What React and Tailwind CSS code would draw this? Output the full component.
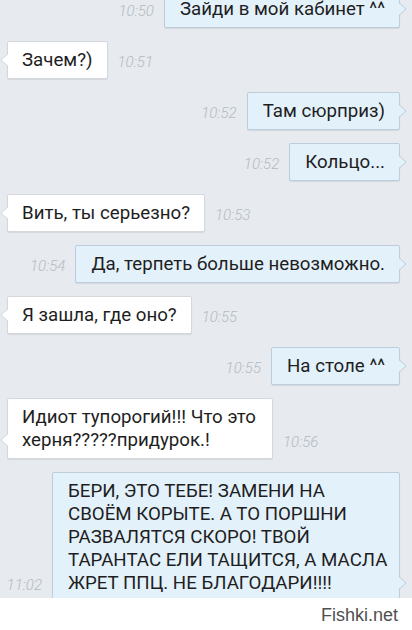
import React from 'react';

// Chat screenshot: incoming (white) and outgoing (light blue) bubbles with times.

function Tail({ side, fill, stroke }) {
  if (side === 'in') {
    return (
      <svg width="9" height="14" viewBox="0 0 9 14" className="absolute left-[-8px] bottom-[11px]">
        <polygon points="9,0.5 1,7 9,13.5" fill={fill} />
        <polyline points="7.5,1 1,7 7.5,13" fill="none" stroke={stroke} strokeWidth="1" />
      </svg>
    );
  }
  return (
    <svg width="9" height="14" viewBox="0 0 9 14" className="absolute right-[-8px] bottom-[11px]">
      <polygon points="0,0.5 8,7 0,13.5" fill={fill} />
      <polyline points="1.5,1 8,7 1.5,13" fill="none" stroke={stroke} strokeWidth="1" />
    </svg>
  );
}

function Time({ children }) {
  return (
    <span className="mb-[8px] text-[15px] leading-[18px] italic font-light text-[#b3bbc3] whitespace-nowrap">
      {children}
    </span>
  );
}

function Incoming({ time, children, width }) {
  return (
    <div className="flex items-end gap-[10px] pl-[7px]">
      <div
        className={`relative bg-white border border-[#d4d8dd] rounded-[2px] pl-[14px] pr-[14px] pt-[7px] pb-[6px] text-[18.7px] leading-[23px] text-[#1e1e1e] whitespace-nowrap shadow-[0_1px_1px_rgba(0,0,0,0.08)] ${width || ''}`}
      >
        {children}
        <Tail side="in" fill="#ffffff" stroke="#d4d8dd" />
      </div>
      <Time>{time}</Time>
    </div>
  );
}

function Outgoing({ time, children, width }) {
  return (
    <div className="flex items-end justify-end gap-[10px] pr-[12px]">
      <Time>{time}</Time>
      <div
        className={`relative bg-[#e3f1fb] border border-[#bccddb] rounded-[2px] pl-[15px] pr-[14px] pt-[7px] pb-[6px] text-[18.7px] leading-[23px] text-[#1e1e1e] whitespace-nowrap shadow-[0_1px_1px_rgba(0,0,0,0.08)] ${width || ''}`}
      >
        {children}
        <Tail side="out" fill="#e3f1fb" stroke="#bccddb" />
      </div>
    </div>
  );
}

export default function App() {
  return (
    <div className="w-[412px] h-[630px] overflow-hidden flex flex-col bg-white font-['Roboto','Noto_Sans',sans-serif]">
      <div className="h-[598px] shrink-0 overflow-hidden bg-[#e7eaee]">
        <div className="flex flex-col gap-[13px] mt-[-10px]">
          <Outgoing time="10:50">Зайди в мой кабинет ^^</Outgoing>
          <Incoming time="10:51">Зачем?)</Incoming>
          <Outgoing time="10:52">Там сюрприз)</Outgoing>
          <Outgoing time="10:52">Кольцо...</Outgoing>
          <Incoming time="10:53">Вить, ты серьезно?</Incoming>
          <Outgoing time="10:54">Да, терпеть больше невозможно.</Outgoing>
          <Incoming time="10:55">Я зашла, где оно?</Incoming>
          <Outgoing time="10:55">На столе ^^</Outgoing>
          <Incoming time="10:56" width="w-[266px]">
            Идиот тупорогий!!! Что это
            <br />
            херня?????придурок.!
          </Incoming>
          <Outgoing time="11:02" width="w-[348px]">
            БЕРИ, ЭТО ТЕБЕ! ЗАМЕНИ НА
            <br />
            СВОЁМ КОРЫТЕ. А ТО ПОРШНИ
            <br />
            РАЗВАЛЯТСЯ СКОРО! ТВОЙ
            <br />
            ТАРАНТАС ЕЛИ ТАЩИТСЯ, А МАСЛА
            <br />
            ЖРЕТ ППЦ. НЕ БЛАГОДАРИ!!!!
          </Outgoing>
        </div>
      </div>
      <div className="flex justify-end pr-[14px] pt-[7px]">
        <span className="text-[18px] leading-[20px] text-[#4f4f4f] font-['Liberation_Sans',Arial,sans-serif]">
          Fishki.net
        </span>
      </div>
    </div>
  );
}
